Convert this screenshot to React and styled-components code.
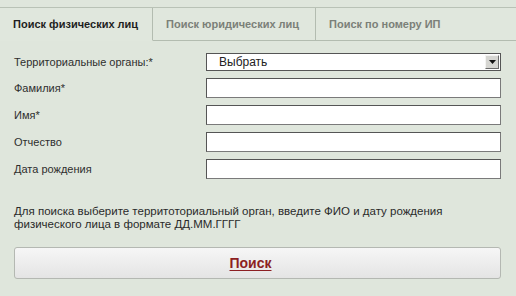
import React from "react";
import styled, { createGlobalStyle } from "styled-components";

const GlobalStyle = createGlobalStyle`
  html, body {
    margin: 0;
    padding: 0;
    background: #dfe6dc;
  }
  body {
    font-family: "Liberation Sans", Arial, sans-serif;
  }
`;

const tabs = [
  { title: "Поиск физических лиц", active: true },
  { title: "Поиск юридических лиц" },
  { title: "Поиск по номеру ИП" },
];

const fields = [
  { label: "Территориальные органы:*", select: true },
  { label: "Фамилия*" },
  { label: "Имя*" },
  { label: "Отчество" },
  { label: "Дата рождения" },
];

export default function App() {
  return (
    <Page>
      <GlobalStyle />
      <TabBar>
        {tabs.map((t) => (
          <Tab key={t.title} $active={t.active}>
            {t.title}
          </Tab>
        ))}
      </TabBar>
      <Form>
        {fields.map((f) => (
          <Row key={f.label} $select={f.select}>
            <Label>{f.label}</Label>
            {f.select ? (
              <Select>
                <span>Выбрать</span>
                <Arrow>
                  <svg width="9" height="6" viewBox="0 0 9 6">
                    <path d="M1 1h7L4.5 5z" fill="#111" />
                  </svg>
                </Arrow>
              </Select>
            ) : (
              <Input />
            )}
          </Row>
        ))}
      </Form>
      <Hint>
        Для поиска выберите территоториальный орган, введите ФИО и дату рождения
        <br />
        физического лица в формате ДД.ММ.ГГГГ
      </Hint>
      <SearchButton>
        <span>Поиск</span>
      </SearchButton>
    </Page>
  );
}

const Page = styled.div`
  width: 516px;
  height: 296px;
  padding-top: 7px;
  box-sizing: border-box;
  overflow: hidden;
`;

const TabBar = styled.div`
  display: flex;
  height: 33px;
  border-top: 1px solid #b9c2b6;
`;

const Tab = styled.div`
  display: flex;
  align-items: center;
  box-sizing: border-box;
  padding: 0 13px;
  font-size: 11px;
  font-weight: bold;
  white-space: nowrap;
  color: ${(p) => (p.$active ? "#1e1e1e" : "#7b8078")};
  border-right: 1px solid #b3bcb0;
  border-bottom: ${(p) => (p.$active ? "1px solid transparent" : "1px solid #b3bcb0")};
  background: #e0e7dd;
  width: ${(p) => (p.$active ? "153px" : "163px")};
  &:last-child {
    flex: 1;
    border-right: none;
  }
`;

const Form = styled.div`
  display: flex;
  flex-direction: column;
  gap: 7px;
  padding: 12px 15px 0 14px;
`;

const Row = styled.div`
  display: grid;
  grid-template-columns: 192px 1fr;
  align-items: center;
  height: ${(p) => (p.$select ? "18px" : "20px")};
`;

const Label = styled.div`
  font-size: 11px;
  color: #2e2e2e;
`;

const Input = styled.div`
  height: 20px;
  box-sizing: border-box;
  background: #fff;
  border: 1px solid #555;
  border-right-color: #7a7a7a;
  border-bottom-color: #7a7a7a;
`;

const Select = styled.div`
  height: 18px;
  box-sizing: border-box;
  background: #fff;
  border: 1px solid #555;
  display: flex;
  align-items: center;
  justify-content: space-between;
  font-size: 12px;
  color: #222;
  padding-left: 12px;
`;

const Arrow = styled.div`
  width: 14px;
  height: 14px;
  margin-right: 1px;
  box-sizing: border-box;
  background: #d6d6d2;
  border: 1px solid;
  border-color: #f4f4f2 #6a6a6a #6a6a6a #f4f4f2;
  display: flex;
  align-items: center;
  justify-content: center;
`;

const Hint = styled.div`
  margin: 26px 15px 0 14px;
  font-size: 11.5px;
  line-height: 13px;
  color: #2a2a2a;
`;

const SearchButton = styled.div`
  margin: 16px 15px 0 14px;
  height: 32px;
  box-sizing: border-box;
  border: 1px solid #b4b8b2;
  border-radius: 3px;
  background: linear-gradient(#f6f6f6, #e4e4e4);
  display: flex;
  align-items: center;
  justify-content: center;
  padding-right: 14px;
  span {
    font-size: 14px;
    font-weight: bold;
    color: #8c1f22;
    text-decoration: underline;
    text-underline-offset: 2px;
  }
`;
